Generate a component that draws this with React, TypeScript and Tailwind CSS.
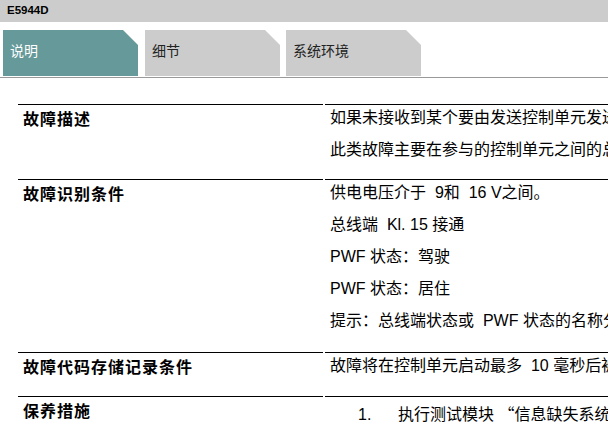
import React from 'react';

interface Row {
  label: string;
  lines: React.ReactNode[];
  numbered?: boolean;
  pb: string;
}

const cjk = { fontFamily: '"Noto Sans CJK SC", sans-serif' };

const rows: Row[] = [
  {
    label: '故障描述',
    lines: [
      '如果未接收到某个要由发送控制单元发送的信息，则会记录此故障。',
      '此类故障主要在参与的控制单元之间的总线通信出现问题时出现。',
    ],
    pb: 'pb-[19px]',
  },
  {
    label: '故障识别条件',
    lines: [
      '供电电压介于\u00a0 9和\u00a0 16 V之间。',
      '总线端\u00a0 Kl. 15 接通',
      'PWF 状态：驾驶',
      'PWF 状态：居住',
      '提示：总线端状态或\u00a0 PWF 状态的名称分别取决于车辆。',
    ],
    pb: 'pb-[21px]',
  },
  {
    label: '故障代码存储记录条件',
    lines: ['故障将在控制单元启动最多\u00a0 10 毫秒后被识别并记录。'],
    pb: 'pb-[20px]',
  },
  {
    label: '保养措施',
    lines: [
      <>
        执行测试模块 <span style={cjk}>“</span>信息缺失系统分析<span style={cjk}>”</span>。
      </>,
    ],
    numbered: true,
    pb: 'pb-[20px]',
  },
];

const tabs = [
  { name: '说明', active: true },
  { name: '细节', active: false },
  { name: '系统环境', active: false },
];

const font = { fontFamily: '"Liberation Sans", "Noto Sans CJK SC", sans-serif' };

const App = () => {
  return (
    <div className="w-full min-h-screen overflow-hidden bg-white text-black" style={font}>
      {/* header bar */}
      <div className="h-[22px] bg-[#cccccc] flex items-center pl-[7px]">
        <span className="text-[11.5px] font-bold leading-none">E5944D</span>
      </div>

      {/* tabs */}
      <div className="mt-[8px] pb-px border-b border-[#999999] flex pl-[3px]">
        {tabs.map((tab, i) => (
          <div
            key={tab.name}
            className={`w-[135px] h-[46px] flex items-center pl-[7px] pb-[3px] text-[14px] [clip-path:polygon(0_0,calc(100%-15px)_0,100%_15px,100%_100%,0_100%)] ${
              tab.active ? 'bg-[#669999] text-white' : 'bg-[#cccccc] text-[#222222]'
            } ${i === 1 ? 'ml-[7px]' : ''} ${i === 2 ? 'ml-[6px]' : ''}`}
          >
            {tab.name}
          </div>
        ))}
      </div>

      {/* table */}
      <div className="mt-[26px] ml-[18px] w-[900px] flex flex-col">
        {rows.map((row) => (
          <div key={row.label} className="flex gap-[2px]">
            <div className="w-[305px] shrink-0 border-t border-black pl-[5px] pt-[3px]">
              <span className="text-[16px] font-bold leading-[22px] tracking-[1px]">{row.label}</span>
            </div>
            <div className={`flex-1 border-t border-black pl-[5px] pt-[3px] ${row.pb}`}>
              {row.numbered ? (
                <div className="flex items-baseline pt-[3px] pl-[28px] text-[16px] leading-[20px] whitespace-nowrap">
                  <span className="w-[40px] shrink-0">1.</span>
                  <span>{row.lines[0]}</span>
                </div>
              ) : (
                <div className="flex flex-col gap-[12px]">
                  {row.lines.map((line, i) => (
                    <p key={i} className="text-[16px] leading-[20px] whitespace-nowrap">
                      {line}
                    </p>
                  ))}
                </div>
              )}
            </div>
          </div>
        ))}
      </div>
    </div>
  );
};

export default App;
